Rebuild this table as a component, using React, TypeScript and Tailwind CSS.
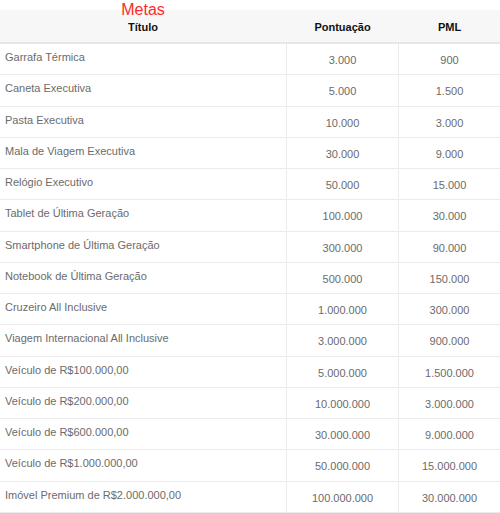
const rows: [string, string, string][] = [
  ["Garrafa Térmica", "3.000", "900"],
  ["Caneta Executiva", "5.000", "1.500"],
  ["Pasta Executiva", "10.000", "3.000"],
  ["Mala de Viagem Executiva", "30.000", "9.000"],
  ["Relógio Executivo", "50.000", "15.000"],
  ["Tablet de Última Geração", "100.000", "30.000"],
  ["Smartphone de Última Geração", "300.000", "90.000"],
  ["Notebook de Última Geração", "500.000", "150.000"],
  ["Cruzeiro All Inclusive", "1.000.000", "300.000"],
  ["Viagem Internacional All Inclusive", "3.000.000", "900.000"],
  ["Veículo de R$100.000,00", "5.000.000", "1.500.000"],
  ["Veículo de R$200.000,00", "10.000.000", "3.000.000"],
  ["Veículo de R$600.000,00", "30.000.000", "9.000.000"],
  ["Veículo de R$1.000.000,00", "50.000.000", "15.000.000"],
  ["Imóvel Premium de R$2.000.000,00", "100.000.000", "30.000.000"],
];

export default function App() {
  return (
    <div className="h-[513px] w-[500px] overflow-hidden bg-white font-['Liberation_Sans',Arial,sans-serif]">
      {/* caption sits over the top of the header band */}
      <div className="grid h-[10px] grid-cols-[286px_1fr]">
        <div className="relative z-10 pt-[1px] text-center text-[16px] leading-[18px] text-[#ff2a2a]">Metas</div>
      </div>
      <div className="grid h-[34px] grid-cols-[286px_113px_101px] border-b-2 border-[#e6e6e6] bg-[#f7f7f7] text-[11px] font-bold text-[#111]">
        <div className="pt-[9px] text-center">Título</div>
        <div className="pt-[9px] text-center">Pontuação</div>
        <div className="pt-[9px] text-center">PML</div>
      </div>
      {rows.map(([title, pts, pml]) => (
        <div
          key={title}
          className="grid h-[31.27px] grid-cols-[286px_113px_101px] border-b border-[#ebebeb] text-[11px] leading-[13px] text-[#6b6b6b]"
        >
          <div className="px-[5px] pt-[7px]">{title}</div>
          <div className="border-x border-[#ebebeb] pt-[10px] text-center">{pts}</div>
          <div className="pt-[10px] text-center">{pml}</div>
        </div>
      ))}
    </div>
  );
}
